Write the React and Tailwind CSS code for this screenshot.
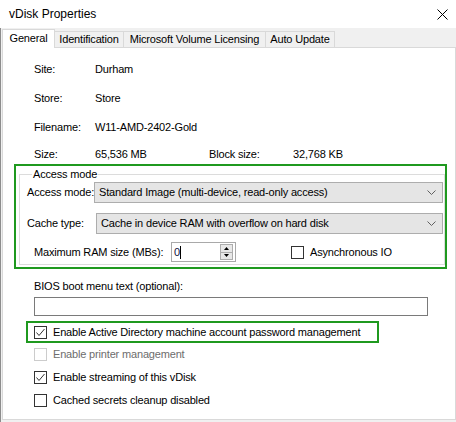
import React from "react";

const font = { fontFamily: '"Liberation Sans", Arial, sans-serif' };

function CheckBox({ checked, disabled }) {
  return (
    <div
      className={`w-[13px] h-[13px] shrink-0 border bg-white flex items-center justify-center ${
        disabled ? "border-[#cccccc]" : "border-[#333333]"
      }`}
    >
      {checked && (
        <svg width="11" height="11" viewBox="0 0 11 11">
          <polyline points="1.5,5.5 4,8.5 9.5,2" fill="none" stroke="#333333" strokeWidth="1" />
        </svg>
      )}
    </div>
  );
}

function Chevron() {
  return (
    <svg width="9" height="5" viewBox="0 0 9 5" className="shrink-0">
      <polyline points="0.5,0.5 4.5,4.5 8.5,0.5" fill="none" stroke="#606060" strokeWidth="1" />
    </svg>
  );
}

function Combo({ text, className = "" }) {
  return (
    <div
      className={`h-[21px] flex items-center justify-between bg-[#e5e5e5] border border-[#adadad] pl-[4px] pr-[6px] ${className}`}
    >
      <span className="whitespace-nowrap">{text}</span>
      <Chevron />
    </div>
  );
}

function InfoRow({ label, value, label2, value2, className = "h-[29px]" }) {
  return (
    <div className={`flex items-center ${className}`}>
      <span className="w-[61px]">{label}</span>
      <span className="w-[114px]">{value}</span>
      {label2 && <span className="w-[84px]">{label2}</span>}
      {value2 && <span>{value2}</span>}
    </div>
  );
}

function CheckRow({ label, checked, disabled, className = "h-[23px]" }) {
  return (
    <div className={`flex items-center gap-[6px] pl-[31px] ${className}`}>
      <CheckBox checked={checked} disabled={disabled} />
      <span className={disabled ? "text-[#6d6d6d]" : ""}>{label}</span>
    </div>
  );
}

export default function App() {
  const tabs = ["Identification", "Microsoft Volume Licensing", "Auto Update"];
  const tabWidths = ["w-[69px]", "w-[142px]", "w-[69px]"];

  return (
    <div
      className="w-[456px] h-[422px] bg-[#f0f0f0] text-black text-[11px] leading-[13px] tracking-[-0.17px] whitespace-nowrap overflow-hidden"
      style={font}
    >
      {/* title bar */}
      <div className="h-[28px] bg-white flex items-center justify-between pl-[9px] pr-[8px]">
        <span className="text-[12px] tracking-normal">vDisk Properties</span>
        <svg width="11" height="11" viewBox="0 0 11 11">
          <path d="M0.5 0.5 L10.5 10.5 M10.5 0.5 L0.5 10.5" stroke="#000" strokeWidth="1" />
        </svg>
      </div>

      <div className="border-l border-[#8c8c8c] pl-[1px] h-[394px]">
        {/* tab strip */}
        <div className="h-[19px] flex items-end">
          <div className="relative z-10 -mb-px w-[53px] h-[19px] bg-white border border-b-0 border-[#d9d9d9] flex items-center justify-center pb-[2px]">
            General
          </div>
          {tabs.map((t, i) => (
            <div
              key={t}
              className={`${tabWidths[i]} h-[16px] border-t border-r border-[#d9d9d9] flex items-center justify-center`}
            >
              {t}
            </div>
          ))}
        </div>

        {/* panel */}
        <div className="w-[454px] h-[373px] bg-white border border-[#d9d9d9] pt-[7px]">
          <div className="pl-[31px]">
            <InfoRow label="Site:" value="Durham" />
            <InfoRow label="Store:" value="Store" />
            <InfoRow label="Filename:" value="W11-AMD-2402-Gold" />
            <InfoRow label="Size:" value="65,536 MB" label2="Block size:" value2="32,768 KB" className="h-[19px] mt-[3px]" />
          </div>

          {/* access mode group, highlighted */}
          <div className="ml-[11px] w-[433px] h-[105px] border-2 border-[#1f991f] pl-[3px] pt-[2px]">
            <fieldset className="w-[426px] h-[97px] border border-[#dcdcdc] pl-[7px] pr-[1px] m-0">
              <legend className="px-[1px] ml-[5px] leading-[13px]">Access mode</legend>
              <div className="flex items-center mt-[1px]">
                <span className="w-[67px] shrink-0">Access mode:</span>
                <Combo text="Standard Image (multi-device, read-only access)" className="flex-1" />
              </div>
              <div className="flex items-center mt-[10px]">
                <span className="w-[69px] shrink-0">Cache type:</span>
                <Combo text="Cache in device RAM with overflow on hard disk" className="flex-1" />
              </div>
              <div className="flex items-center mt-[8px] pl-[7px]">
                <span className="w-[137px] shrink-0">Maximum RAM size (MBs):</span>
                <div className="w-[65px] h-[20px] border border-[#a9a9a9] flex items-center justify-between pl-[2px] pr-[2px]">
                  <span className="flex items-center">
                    <span className="text-[#101040]">0</span>
                    <span className="w-px h-[13px] bg-black"></span>
                  </span>
                  <div className="w-[13px] h-[16px] border border-[#adadad] bg-[#e8e8e8] flex flex-col">
                    <div className="flex-1 flex items-center justify-center border-b border-[#adadad]">
                      <svg width="5" height="3" viewBox="0 0 5 3">
                        <polygon points="2.5,0 5,3 0,3" fill="#000" />
                      </svg>
                    </div>
                    <div className="flex-1 flex items-center justify-center">
                      <svg width="5" height="3" viewBox="0 0 5 3">
                        <polygon points="0,0 5,0 2.5,3" fill="#000" />
                      </svg>
                    </div>
                  </div>
                </div>
                <div className="flex items-center gap-[6px] ml-[55px]">
                  <CheckBox />
                  <span>Asynchronous IO</span>
                </div>
              </div>
            </fieldset>
          </div>

          {/* BIOS text */}
          <div className="pl-[31px] mt-[11px]">
            <div className="h-[13px]">BIOS boot menu text (optional):</div>
            <div className="mt-[4px] w-[394px] h-[19px] border border-[#7a7a7a] bg-white"></div>
          </div>

          {/* AD checkbox, highlighted */}
          <div className="ml-[23px] mt-[5px] w-[353px] h-[22px] border-2 border-[#1f991f] flex items-center gap-[6px] pl-[6px]">
            <CheckBox checked />
            <span>Enable Active Directory machine account password management</span>
          </div>

          <CheckRow label="Enable printer management" disabled />
          <CheckRow label="Enable streaming of this vDisk" checked />
          <CheckRow label="Cached secrets cleanup disabled" className="h-[22px]" />
        </div>
      </div>
    </div>
  );
}
